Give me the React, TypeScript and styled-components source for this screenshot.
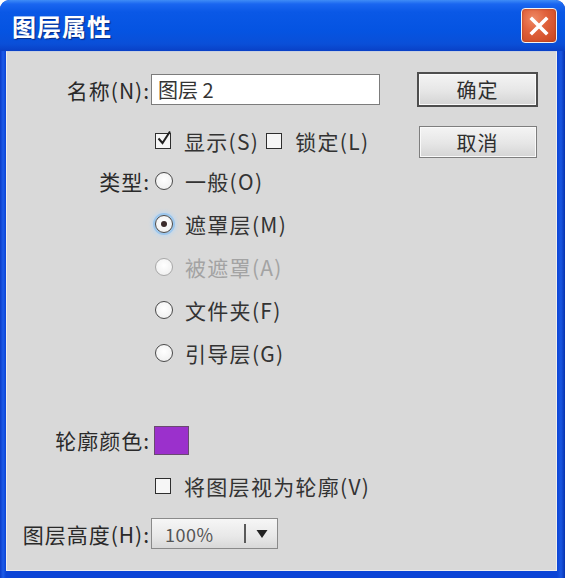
import React from 'react';
import styled, { createGlobalStyle } from 'styled-components';

const GlobalStyle = createGlobalStyle`
  html, body {
    margin: 0;
    padding: 0;
    background: #ffffff;
  }
  * {
    box-sizing: border-box;
  }
`;

const FONT = `"Noto Sans CJK SC", "Noto Sans", sans-serif`;

const App: React.FC = () => {
  return (
    <>
      <GlobalStyle />
      <Window>
        <TitleBar>
          <Title>图层属性</Title>
          <CloseButton aria-label="关闭">
            <svg width="22" height="22" viewBox="0 0 22 22">
              <path d="M4 4 L18 18 M18 4 L4 18" stroke="#ffffff" strokeWidth="3.6" strokeLinecap="square" />
            </svg>
          </CloseButton>
        </TitleBar>

        <Body>
          <Form>
            <Row $height={31}>
              <Label>名称(N):</Label>
              <NameInput defaultValue="图层 2" />
            </Row>

            <Row $height={30} $top={21}>
              <span />
              <Controls>
                <CheckItem>
                  <CheckBox $checked>
                    <svg width="18" height="18" viewBox="0 0 18 18">
                      <path d="M3.5 8.5 L7.5 13 L15 1.5" stroke="#222" strokeWidth="2" fill="none" />
                    </svg>
                  </CheckBox>
                  <OptionText>显示(S)</OptionText>
                </CheckItem>
                <CheckItem>
                  <CheckBox />
                  <OptionText>锁定(L)</OptionText>
                </CheckItem>
              </Controls>
            </Row>

            <Row $height={43} $top={3}>
              <Label>类型:</Label>
              <RadioItem>
                <Radio />
                <OptionText>一般(O)</OptionText>
              </RadioItem>
            </Row>
            <Row $height={43}>
              <span />
              <RadioItem>
                <Radio $selected />
                <OptionText>遮罩层(M)</OptionText>
              </RadioItem>
            </Row>
            <Row $height={43}>
              <span />
              <RadioItem>
                <Radio $disabled />
                <OptionText $disabled>被遮罩(A)</OptionText>
              </RadioItem>
            </Row>
            <Row $height={43}>
              <span />
              <RadioItem>
                <Radio />
                <OptionText>文件夹(F)</OptionText>
              </RadioItem>
            </Row>
            <Row $height={43}>
              <span />
              <RadioItem>
                <Radio />
                <OptionText>引导层(G)</OptionText>
              </RadioItem>
            </Row>

            <Row $height={29} $top={51}>
              <Label>轮廓颜色:</Label>
              <Swatch $color="#9b30cc" />
            </Row>

            <Row $height={30} $top={17}>
              <span />
              <CheckItem>
                <CheckBox />
                <OptionText>将图层视为轮廓(V)</OptionText>
              </CheckItem>
            </Row>

            <Row $height={31} $top={17}>
              <Label>图层高度(H):</Label>
              <Select>
                <SelectValue>100%</SelectValue>
                <SelectDivider />
                <SelectArrow>
                  <svg width="12" height="10" viewBox="0 0 12 10">
                    <path d="M0.5 1 L11.5 1 L6 9 Z" fill="#222" />
                  </svg>
                </SelectArrow>
              </Select>
            </Row>
          </Form>

          <ButtonColumn>
            <DialogButton $primary>确定</DialogButton>
            <DialogButton>取消</DialogButton>
          </ButtonColumn>
        </Body>
      </Window>
    </>
  );
};

const Window = styled.div`
  width: 565px;
  height: 578px;
  display: flex;
  flex-direction: column;
  border-radius: 9px 9px 0 0;
  background: linear-gradient(to right, #0a3bc8 0px, #1c5be8 3px, #0b44d6 6px, #0b44d6 calc(100% - 8px), #1a56e0 calc(100% - 4px), #0733b0 100%);
  overflow: hidden;
  font-family: ${FONT};
`;

const TitleBar = styled.div`
  height: 51px;
  display: flex;
  align-items: center;
  justify-content: space-between;
  padding: 0 12px 0 12px;
  background: linear-gradient(
    to bottom,
    #3f8cf6 0px,
    #1a66f0 4px,
    #0a58e6 12px,
    #0554e2 30px,
    #0a4fd8 44px,
    #0940c6 51px
  );
  border-radius: 9px 9px 0 0;
`;

const Title = styled.h1`
  margin: 0;
  font-size: 24px;
  font-weight: 700;
  color: #ffffff;
  letter-spacing: 1px;
  text-shadow: 1px 1px 1px #0a2a80;
`;

const CloseButton = styled.button`
  width: 36px;
  height: 35px;
  margin-right: -4px;
  padding: 0;
  display: flex;
  align-items: center;
  justify-content: center;
  border: 1.5px solid #f2f2f2;
  border-radius: 4px;
  background: radial-gradient(circle at 35% 30%, #ef8a66 0%, #e0623c 40%, #c7441e 100%);
  box-shadow: inset 0 0 2px rgba(120, 30, 10, 0.6);
`;

const Body = styled.div`
  flex: 1;
  display: flex;
  margin: 0 8px 7px 6px;
  padding-top: 22px;
  background: #d9d9d9;
  border: 1px solid #eeeeee;
  border-top-color: #c8d0e0;
`;

const Form = styled.div`
  flex: 1;
  display: flex;
  flex-direction: column;
`;

const Row = styled.div<{ $height: number; $top?: number }>`
  display: grid;
  grid-template-columns: 143px auto;
  align-items: center;
  height: ${({ $height }) => $height}px;
  margin-top: ${({ $top }) => $top || 0}px;
`;

const Label = styled.span`
  text-align: right;
  font-size: 21px;
  color: #2a2a2a;
  letter-spacing: 1px;
  white-space: nowrap;
`;

const NameInput = styled.input`
  width: 229px;
  height: 31px;
  margin-left: 1px;
  padding: 0 6px;
  border: 1px solid #7c7c7c;
  background: #ffffff;
  font-family: ${FONT};
  font-size: 20px;
  color: #333333;
  outline: none;
`;

const Controls = styled.div`
  display: flex;
  align-items: center;
  gap: 2px;
`;

const CheckItem = styled.label`
  display: flex;
  align-items: center;
  gap: 13px;
  padding-left: 5px;
`;

const CheckBox = styled.span<{ $checked?: boolean }>`
  position: relative;
  width: 16px;
  height: 16px;
  border: 1px solid #2e2e2e;
  background: #f6f6f6;

  svg {
    position: absolute;
    left: -1px;
    top: -4px;
  }
`;

const RadioItem = styled.label`
  display: flex;
  align-items: center;
  gap: 12px;
  padding-left: 5px;
`;

const Radio = styled.span<{ $selected?: boolean; $disabled?: boolean }>`
  position: relative;
  width: 18px;
  height: 18px;
  border-radius: 50%;
  border: 1.5px solid ${({ $disabled }) => ($disabled ? '#a8a8a8' : '#4a4a4a')};
  background: radial-gradient(circle at 50% 40%, #ffffff 0%, #ececec 100%);
  box-shadow: ${({ $selected }) => ($selected ? '0 0 0 2px #9cc6ec, 0 0 4px 3px #bcd8f2' : 'none')};

  &::after {
    content: '';
    display: ${({ $selected }) => ($selected ? 'block' : 'none')};
    position: absolute;
    left: 50%;
    top: 50%;
    width: 6px;
    height: 6px;
    margin: -3px 0 0 -3px;
    border-radius: 50%;
    background: #3a2a2a;
  }
`;

const OptionText = styled.span<{ $disabled?: boolean }>`
  font-size: 21px;
  letter-spacing: 1.3px;
  color: ${({ $disabled }) => ($disabled ? '#a3a3a3' : '#333333')};
  white-space: nowrap;
`;

const Swatch = styled.span<{ $color: string }>`
  width: 35px;
  height: 29px;
  margin-left: 4px;
  border: 1px solid #6a4a70;
  background: ${({ $color }) => $color};
`;

const Select = styled.div`
  width: 127px;
  height: 31px;
  margin-left: 1px;
  display: flex;
  align-items: center;
  border: 1px solid #8a8a8a;
  background: linear-gradient(to bottom, #f6f6f6 0%, #e8e8e8 60%, #d8d8d8 100%);
`;

const SelectValue = styled.span`
  flex: 1;
  padding-left: 13px;
  font-size: 18px;
  letter-spacing: 0.5px;
  color: #555555;
`;

const SelectDivider = styled.span`
  width: 2px;
  height: 19px;
  background: #5a5a5a;
`;

const SelectArrow = styled.span`
  width: 31px;
  display: flex;
  justify-content: center;
  align-items: center;
`;

const ButtonColumn = styled.div`
  width: 121px;
  margin-top: -2px;
  margin-right: 18px;
  display: flex;
  flex-direction: column;
  align-items: center;
  gap: 19px;
`;

const DialogButton = styled.button<{ $primary?: boolean }>`
  width: ${({ $primary }) => ($primary ? 121 : 118)}px;
  height: ${({ $primary }) => ($primary ? 35 : 32)}px;
  padding: 0;
  border: ${({ $primary }) => ($primary ? '2px solid #4e4e4e' : '1px solid #7e7e7e')};
  background: linear-gradient(to bottom, #f4f4f4 0%, #e6e6e6 55%, #d4d4d4 100%);
  box-shadow: inset 0 0 0 1px #fafafa;
  font-family: ${FONT};
  font-size: 20px;
  letter-spacing: 1px;
  color: #2e2e2e;
`;

export default App;
